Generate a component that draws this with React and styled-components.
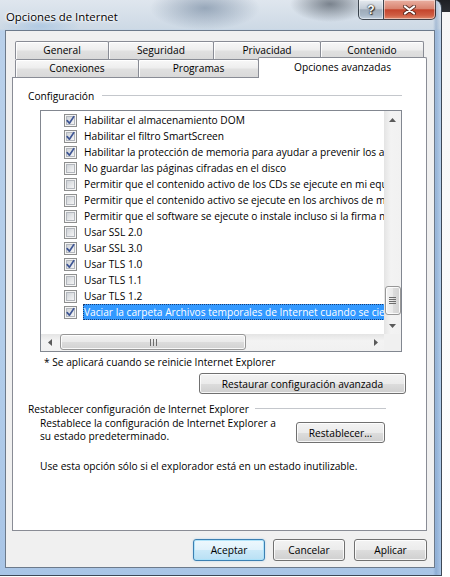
import React from 'react';
import styled, { createGlobalStyle } from 'styled-components';

const Global = createGlobalStyle`
  html, body { margin: 0; padding: 0; }
  body {
    width: 450px; height: 577px; overflow: hidden;
    background: linear-gradient(to bottom, #1e2024 0px, #2c2f34 12px, #f6f6f6 12px, #ffffff 100%);
    font-family: "Open Sans", "Noto Sans", sans-serif;
  }
`;

const FONT = `"Open Sans", "Noto Sans", sans-serif`;

const Window = styled.div`
  box-sizing: border-box;
  width: 442px;
  height: 576px;
  display: flex;
  flex-direction: column;
  padding: 0 6px 7px 5px;
  border-right: 1px solid #3d4856;
  border-bottom: 1px solid #3d4856;
  border-radius: 0 8px 0 0;
  background:
    radial-gradient(ellipse 55px 22px at 205px 8px, rgba(70, 95, 125, 0.45), transparent),
    radial-gradient(ellipse 40px 18px at 330px 4px, rgba(40, 50, 62, 0.55), transparent),
    radial-gradient(ellipse 40px 12px at 40px 26px, rgba(120, 170, 220, 0.35), transparent),
    linear-gradient(to right, rgba(255,255,255,0) 0, rgba(255,255,255,0) 433px, rgba(90,130,180,0.35) 436px, rgba(255,255,255,0) 441px),
    linear-gradient(to bottom, #dfe6ee 0px, #cdd9e5 29px, #b9d0ea 31px, #b2cdea 60%, #a9c5e6 100%);
`;

const TitleBar = styled.div`
  height: 30px;
  flex-shrink: 0;
  display: flex;
  justify-content: space-between;
  align-items: flex-start;
`;

const Title = styled.div`
  padding: 8px 0 0 1px;
  font-family: ${FONT};
  font-size: 11.4px;
  line-height: 17px;
  color: #000;
  text-shadow: 0 0 5px #fff, 0 0 3px #fff, 0 0 2px #fff;
`;

const CaptionGroup = styled.div`
  display: flex;
  margin-right: -1px;
`;

const CaptionButton = styled.div`
  box-sizing: border-box;
  width: ${p => p.$w}px;
  height: 20px;
  display: flex;
  align-items: center;
  justify-content: center;
  border: 1px solid rgba(38, 46, 56, 0.85);
  border-top: none;
  border-left-width: ${p => (p.$first ? 1 : 0)}px;
  border-radius: ${p => (p.$first ? '0 0 0 5px' : '0 0 5px 0')};
  box-shadow: inset 0 0 0 1px rgba(255, 255, 255, 0.45);
  background: ${p =>
    p.$red
      ? 'linear-gradient(to bottom, #eab0a2 0%, #d98470 45%, #c4442c 52%, #cf5d43 80%, #e08a6c 100%)'
      : 'linear-gradient(to bottom, #e6ebf0 0%, #c3ccd6 45%, #9eabb9 52%, #a9b8c7 80%, #c3d1df 100%)'};
`;

const HelpGlyph = styled.span`
  font-family: "Liberation Sans", Arial, sans-serif;
  font-weight: bold;
  font-size: 12px;
  line-height: 12px;
  color: #fff;
  text-shadow: 0 0 1px #222, 0 0 2px #333, 1px 1px 1px #333;
`;

const Client = styled.div`
  flex: 1;
  display: flex;
  flex-direction: column;
  background: #f0f0f0;
  border: 1px solid #6c7a8b;
  padding: 10px 0 6px 0;
`;

const TabArea = styled.div`
  display: flex;
  flex-direction: column;
  padding-left: 9px;
  height: 36px;
`;

const TabRow = styled.div`
  display: flex;
  align-items: flex-start;
  height: 18px;
`;

const Tab = styled.div`
  box-sizing: border-box;
  width: ${p => p.$w}px;
  height: ${p => (p.$active ? 21 : 18)}px;
  margin-left: ${p => (p.$first ? 0 : -1)}px;
  margin-top: ${p => (p.$active ? -2 : 0)}px;
  position: relative;
  z-index: ${p => (p.$active ? 2 : 1)};
  border: 1px solid #898c95;
  border-bottom: none;
  border-radius: 2px 2px 0 0;
  background: ${p =>
    p.$active
      ? '#ffffff'
      : 'linear-gradient(to bottom, #f8f8f8 0%, #eeeeee 45%, #e0e0e0 55%, #d9d9d9 100%)'};
  box-shadow: ${p => (p.$active ? 'none' : 'inset 1px 1px 0 rgba(255,255,255,0.9)')};
  font-family: ${FONT};
  font-size: 10.2px;
  line-height: ${p => (p.$active ? 16 : 17)}px;
  padding-top: ${p => (p.$active ? 1 : 0)}px;
  text-align: center;
  color: #000;
  white-space: nowrap;
`;

const Panel = styled.div`
  box-sizing: border-box;
  margin-left: 6px;
  width: 415px;
  height: 454px;
  border: 1px solid #898c95;
  background: #fff;
  display: flex;
  flex-direction: column;
  align-items: flex-start;
  padding: 11px 0 0 15px;
  font-family: ${FONT};
  font-size: 10.2px;
  color: #000;
`;

const GroupHeader = styled.div`
  display: flex;
  align-items: center;
  width: ${p => p.$w}px;
  height: 14px;
  line-height: 14px;
  margin-top: ${p => p.$mt || 0}px;
  white-space: nowrap;
`;

const GroupLine = styled.div`
  flex: 1;
  height: 1px;
  margin-left: ${p => p.$gap}px;
  margin-top: -2px;
  background: #c4c7cc;
`;

const ListBox = styled.div`
  box-sizing: border-box;
  margin: 7px 0 0 12px;
  width: 362px;
  height: 242px;
  border: 1px solid #828790;
  display: grid;
  grid-template-columns: 1fr 17px;
  grid-template-rows: 1fr 17px;
  background: #fff;
`;

const ListView = styled.div`
  overflow: hidden;
  padding-top: 1px;
`;

const Row = styled.div`
  display: flex;
  align-items: center;
  height: 16px;
  padding-left: 23px;
  white-space: nowrap;
`;

const RowLabel = styled.span`
  margin-left: 6px;
  padding: 0 2px 0 1px;
  height: 16px;
  line-height: 16px;
  background: ${p => (p.$sel ? '#3399ff' : 'transparent')};
  color: ${p => (p.$sel ? '#fff' : '#000')};
  outline: ${p => (p.$sel ? '1px dotted #1c3d73' : 'none')};
  outline-offset: -1px;
`;

const VScroll = styled.div`
  display: flex;
  flex-direction: column;
  background: linear-gradient(to right, #e4e4e4, #f3f3f3 40%, #f1f1f1 100%);
`;

const HScroll = styled.div`
  display: flex;
  background: linear-gradient(to bottom, #e4e4e4, #f3f3f3 40%, #f1f1f1 100%);
`;

const Corner = styled.div`
  background: #f0f0f0;
`;

const ArrowBox = styled.div`
  width: 17px;
  height: 17px;
  flex-shrink: 0;
  display: flex;
  align-items: center;
  justify-content: center;
`;

const Track = styled.div`
  flex: 1;
  display: flex;
  flex-direction: ${p => (p.$vertical ? 'column' : 'row')};
`;

const Thumb = styled.div`
  box-sizing: border-box;
  display: flex;
  align-items: center;
  justify-content: center;
  border: 1px solid #979797;
  border-radius: 3px;
  box-shadow: inset 0 0 0 1px rgba(255, 255, 255, 0.85);
  background: ${p =>
    p.$vertical
      ? 'linear-gradient(to right, #f3f3f3 0%, #e9e9e9 50%, #dcdcdc 51%, #d2d2d2 100%)'
      : 'linear-gradient(to bottom, #f3f3f3 0%, #e9e9e9 50%, #dcdcdc 51%, #d2d2d2 100%)'};
`;

const Footnote = styled.div`
  margin: 3px 0 0 16px;
  line-height: 14px;
  white-space: nowrap;
`;

const Button = styled.button`
  box-sizing: border-box;
  width: ${p => p.$w}px;
  height: ${p => p.$h || 21}px;
  margin: ${p => p.$m || 0};
  padding: 0;
  flex-shrink: 0;
  border: 1px solid ${p => (p.$default ? '#3c7fb1' : '#707070')};
  border-radius: 3px;
  background: ${p =>
    p.$default
      ? 'linear-gradient(to bottom, #eef8fd 0%, #e0f2fc 50%, #cbe9f8 51%, #b9e0f4 100%)'
      : 'linear-gradient(to bottom, #f3f3f3 0%, #ebebeb 50%, #dddddd 51%, #cfcfcf 100%)'};
  box-shadow: ${p =>
    p.$default
      ? 'inset 0 0 0 1px rgba(170, 225, 250, 0.9), 0 0 2px rgba(100, 180, 230, 0.5)'
      : 'inset 0 0 0 1px rgba(255, 255, 255, 0.8)'};
  font-family: ${FONT};
  font-size: 10.2px;
  line-height: 14px;
  color: #000;
  white-space: nowrap;
`;

const DescRow = styled.div`
  display: flex;
  align-items: flex-start;
  margin: 1px 0 0 12px;
`;

const DescText = styled.div`
  width: 256px;
  line-height: 13px;
  white-space: nowrap;
`;

const Note = styled.div`
  margin: 16px 0 0 12px;
  line-height: 14px;
  white-space: nowrap;
`;

const ButtonRow = styled.div`
  display: flex;
  justify-content: flex-end;
  margin-top: 8px;
  padding-right: 7px;
  height: 22px;
`;

const CheckBox = ({ checked }) => (
  <svg width="13" height="13" viewBox="0 0 13 13" style={{ flexShrink: 0 }}>
    <defs>
      <linearGradient id="cbIn" x1="0" y1="0" x2="1" y2="1">
        <stop offset="0" stopColor="#cdd1d6" />
        <stop offset="1" stopColor="#f7f7f7" />
      </linearGradient>
    </defs>
    <rect x="0.5" y="0.5" width="12" height="12" fill="#f5f5f5" stroke="#8e8f8f" />
    <rect x="2.5" y="2.5" width="8" height="8" fill="url(#cbIn)" stroke="#b3b7bd" />
    {checked && (
      <path d="M3.2 6.6 L5.4 9.2 L9.8 2.6" fill="none" stroke="#3e5594" strokeWidth="1.7" strokeLinejoin="round" strokeLinecap="round" />
    )}
  </svg>
);

const Arrow = ({ dir }) => {
  const pts = {
    up: '0,4 7,4 3.5,0',
    down: '0,0 7,0 3.5,4',
    left: '4,0 4,7 0,3.5',
    right: '0,0 0,7 4,3.5',
  }[dir];
  const vertical = dir === 'up' || dir === 'down';
  return (
    <svg width={vertical ? 7 : 4} height={vertical ? 4 : 7} viewBox={vertical ? '0 0 7 4' : '0 0 4 7'}>
      <polygon points={pts} fill="#5a5a5a" />
    </svg>
  );
};

const GripV = () => (
  <svg width="8" height="8" viewBox="0 0 8 8">
    {[0, 2, 4, 6].map(y => (
      <rect key={y} x="0" y={y} width="7" height="1" fill="#6d6d6d" />
    ))}
  </svg>
);

const GripH = () => (
  <svg width="7" height="7" viewBox="0 0 7 7">
    {[0, 3, 6].map(x => (
      <rect key={x} x={x} y="0" width="1" height="7" fill="#6d6d6d" />
    ))}
  </svg>
);

const rows = [
  ['Habilitar el almacenamiento DOM', true],
  ['Habilitar el filtro SmartScreen', true],
  ['Habilitar la protección de memoria para ayudar a prevenir los ataques en línea*', true],
  ['No guardar las páginas cifradas en el disco', false],
  ['Permitir que el contenido activo de los CDs se ejecute en mi equipo*', false],
  ['Permitir que el contenido activo se ejecute en los archivos de mi equipo*', false],
  ['Permitir que el software se ejecute o instale incluso si la firma no es válida', false],
  ['Usar SSL 2.0', false],
  ['Usar SSL 3.0', true],
  ['Usar TLS 1.0', true],
  ['Usar TLS 1.1', false],
  ['Usar TLS 1.2', false],
  ['Vaciar la carpeta Archivos temporales de Internet cuando se cierre el explorador', true, true],
];

const tabsTop = [
  ['General', 94],
  ['Seguridad', 106],
  ['Privacidad', 108],
  ['Contenido', 104],
];
const tabsBottom = [
  ['Conexiones', 124],
  ['Programas', 121],
  ['Opciones avanzadas', 169, true],
];

export default function App() {
  return (
    <>
      <Global />
      <Window>
        <TitleBar>
          <Title>Opciones de Internet</Title>
          <CaptionGroup>
            <CaptionButton $w={26} $first>
              <HelpGlyph>?</HelpGlyph>
            </CaptionButton>
            <CaptionButton $w={52} $red>
              <svg width="13" height="10" viewBox="0 0 13 10">
                <path d="M2 1.5 L11 8.5 M11 1.5 L2 8.5" stroke="#3a1c16" strokeWidth="4" strokeLinecap="round" opacity="0.75" />
                <path d="M2 1.5 L11 8.5 M11 1.5 L2 8.5" stroke="#ffffff" strokeWidth="2.2" strokeLinecap="round" />
              </svg>
            </CaptionButton>
          </CaptionGroup>
        </TitleBar>
        <Client>
          <TabArea>
            <TabRow>
              {tabsTop.map(([t, w], i) => (
                <Tab key={t} $w={w} $first={i === 0}>{t}</Tab>
              ))}
            </TabRow>
            <TabRow>
              {tabsBottom.map(([t, w, a], i) => (
                <Tab key={t} $w={w} $first={i === 0} $active={a}>{t}</Tab>
              ))}
            </TabRow>
          </TabArea>
          <Panel>
            <GroupHeader $w={374}>
              Configuración
              <GroupLine $gap={8} />
            </GroupHeader>
            <ListBox>
              <ListView>
                {rows.map(([label, checked, sel]) => (
                  <Row key={label}>
                    <CheckBox checked={checked} />
                    <RowLabel $sel={sel}>{label}</RowLabel>
                  </Row>
                ))}
              </ListView>
              <VScroll>
                <ArrowBox><Arrow dir="up" /></ArrowBox>
                <Track $vertical>
                  <Thumb $vertical style={{ marginTop: 158, height: 29, width: 16, marginLeft: 1 }}>
                    <GripV />
                  </Thumb>
                </Track>
                <ArrowBox><Arrow dir="down" /></ArrowBox>
              </VScroll>
              <HScroll>
                <ArrowBox><Arrow dir="left" /></ArrowBox>
                <Track>
                  <Thumb style={{ marginLeft: 2, width: 186, height: 16, marginTop: 0 }}>
                    <GripH />
                  </Thumb>
                </Track>
                <ArrowBox><Arrow dir="right" /></ArrowBox>
              </HScroll>
              <Corner />
            </ListBox>
            <Footnote>* Se aplicará cuando se reinicie Internet Explorer</Footnote>
            <Button $w={207} $h={21} $m="4px 0 0 171px">Restaurar configuración avanzada</Button>
            <GroupHeader $w={358} $mt={8}>
              Restablecer configuración de Internet Explorer
              <GroupLine $gap={6} />
            </GroupHeader>
            <DescRow>
              <DescText>
                Restablece la configuración de Internet Explorer a
                <br />
                su estado predeterminado.
              </DescText>
              <Button $w={89} $h={21} $m="5px 0 0 0">Restablecer...</Button>
            </DescRow>
            <Note>Use esta opción sólo si el explorador está en un estado inutilizable.</Note>
          </Panel>
          <ButtonRow>
            <Button $w={72} $h={22} $default>Aceptar</Button>
            <Button $w={72} $h={22} $m="0 0 0 8px">Cancelar</Button>
            <Button $w={73} $h={22} $m="0 0 0 9px">Aplicar</Button>
          </ButtonRow>
        </Client>
      </Window>
    </>
  );
}
